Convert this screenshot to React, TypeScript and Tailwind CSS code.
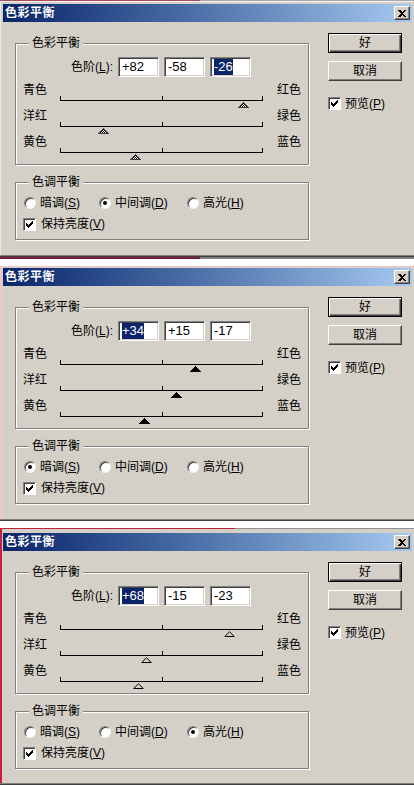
import React, { useId } from "react";

type TriKind = "hatch" | "solid" | "outline";

function Tri({ kind }: { kind: TriKind }) {
  const id = useId().replace(/:/g, "");
  if (kind === "solid") {
    return (
      <svg width="11" height="6" viewBox="0 0 11 6" shapeRendering="crispEdges">
        <path d="M5.5 0 L11 6 L0 6 Z" fill="#000" />
      </svg>
    );
  }
  if (kind === "outline") {
    return (
      <svg width="11" height="6" viewBox="0 0 11 6">
        <path d="M5.5 0.8 L10.3 5.5 L0.7 5.5 Z" fill="#d4d0c8" stroke="#000" strokeWidth="1" />
      </svg>
    );
  }
  return (
    <svg width="11" height="6" viewBox="0 0 11 6" shapeRendering="crispEdges">
      <defs>
        <pattern id={`p${id}`} width="2" height="2" patternUnits="userSpaceOnUse">
          <rect width="2" height="2" fill="#ffffff" />
          <rect x="0" y="0" width="1" height="1" fill="#000" />
          <rect x="1" y="1" width="1" height="1" fill="#000" />
        </pattern>
      </defs>
      <path d="M5.5 0.5 L10.5 5.5 L0.5 5.5 Z" fill={`url(#p${id})`} stroke="#404040" strokeWidth="1" />
    </svg>
  );
}

function CheckBox() {
  return (
    <div className="w-[13px] h-[13px] bg-white border-t border-l border-t-[#808080] border-l-[#808080] border-b border-r border-b-white border-r-white shadow-[inset_1px_1px_0_#404040] flex items-center justify-center shrink-0">
      <svg width="7" height="7" viewBox="0 0 7 7" shapeRendering="crispEdges">
        <path d="M0 2h1v1h1v1h1V3h1V2h1V1h1V0h1v3h-1v1h-1v1h-1v1h-1v1H2V6H1V5H0z" fill="#000" />
      </svg>
    </div>
  );
}

function Radio({ on }: { on: boolean }) {
  return (
    <div className="w-[12px] h-[12px] rounded-full bg-white border border-t-[#808080] border-l-[#808080] border-b-[#f4f4f4] border-r-[#f4f4f4] shadow-[inset_1px_1px_0_#404040] flex items-center justify-center shrink-0">
      {on && <div className="w-[4px] h-[4px] rounded-full bg-black" />}
    </div>
  );
}

function Field({ v, sel }: { v: string; sel: boolean }) {
  return (
    <div className="w-[41px] h-[20px] bg-white border-t border-l border-t-[#808080] border-l-[#808080] border-b border-r border-b-white border-r-white shadow-[inset_1px_1px_0_#404040,inset_-1px_-1px_0_#d4d0c8] flex items-center pl-[3px] text-[13px] leading-[16px]">
      {sel ? <span className="bg-[#0a246a] text-white">{v}</span> : <span>{v}</span>}
    </div>
  );
}

function SliderRow({ left, right, v, kind }: { left: string; right: string; v: number; kind: TriKind }) {
  const pct = (v + 100) / 2;
  return (
    <div className="h-[26px]">
      <div className="flex justify-between px-[7px] leading-[14px] h-[14px]">
        <span>{left}</span>
        <span>{right}</span>
      </div>
      <div className="relative ml-[44px] -mt-[1px] w-[203px] h-[5px] border-l border-r border-b border-black">
        <div className="absolute left-1/2 top-0 h-full w-px bg-black" />
        <div className="absolute top-[6px] h-[6px] leading-none" style={{ left: `calc(${pct}% - 5.5px)` }}>
          <Tri kind={kind} />
        </div>
      </div>
    </div>
  );
}

function Button({ label, def }: { label: string; def?: boolean }) {
  return def ? (
    <div className="w-[74px] h-[20px] border border-black flex items-center justify-center shadow-[inset_1px_1px_0_#fff,inset_-1px_-1px_0_#404040,inset_-2px_-2px_0_#808080] leading-[14px]">
      {label}
    </div>
  ) : (
    <div className="w-[74px] h-[20px] border border-t-white border-l-white border-b-[#404040] border-r-[#404040] flex items-center justify-center shadow-[inset_-1px_-1px_0_#808080] leading-[14px]">
      {label}
    </div>
  );
}

function Dialog({
  values,
  sel,
  tone,
  kind,
  bodyH,
}: {
  values: number[];
  sel: number;
  tone: number;
  kind: TriKind;
  bodyH: number;
}) {
  const fmt = (n: number) => (n > 0 ? `+${n}` : `${n}`);
  const tones = [
    { t: "暗调", k: "S", w: "w-[75px]" },
    { t: "中间调", k: "D", w: "w-[88px]" },
    { t: "高光", k: "H", w: "w-[80px]" },
  ];
  return (
    <div className="pr-[2px]">
      <div className="h-[18px] flex items-center justify-between bg-linear-to-r from-[#0a246a] to-[#a6caf0]">
        <span className="pl-[2px] text-white font-bold text-[12px] leading-[18px] tracking-[0.5px]">色彩平衡</span>
        <div className="mr-[2px] w-[16px] h-[14px] bg-[#d4d0c8] border border-t-white border-l-white border-b-[#404040] border-r-[#404040] shadow-[inset_-1px_-1px_0_#808080] flex items-center justify-center">
          <svg width="8" height="7" viewBox="0 0 8 7" shapeRendering="crispEdges">
            <path d="M0 0h2l2 2 2-2h2L5 3.5 8 7H6L4 5 2 7H0l3-3.5z" fill="#000" />
          </svg>
        </div>
      </div>
      <div className="flex bg-[#d4d0c8]" style={{ height: bodyH }}>
        <div className="ml-[12px] mt-[14px] w-[294px]">
          <fieldset className="border border-[#808080] shadow-[1px_1px_0_#fff,inset_1px_1px_0_#fff] pt-[7px] pb-[3px]">
            <legend className="ml-[13px] px-[3px] bg-[#d4d0c8] leading-[14px]">色彩平衡</legend>
            <div className="flex items-center h-[20px] gap-[5px]">
              <div className="w-[97px] text-right leading-[14px]">
                色阶(<u>L</u>):
              </div>
              {values.map((v, i) => (
                <Field key={i} v={fmt(v)} sel={i === sel} />
              ))}
            </div>
            <div className="mt-[6px]">
              <SliderRow left="青色" right="红色" v={values[0]} kind={kind} />
              <SliderRow left="洋红" right="绿色" v={values[1]} kind={kind} />
              <SliderRow left="黄色" right="蓝色" v={values[2]} kind={kind} />
            </div>
          </fieldset>
          <fieldset className="mt-[10px] border border-[#808080] shadow-[1px_1px_0_#fff,inset_1px_1px_0_#fff] pt-[7px] pb-[8px]">
            <legend className="ml-[13px] px-[3px] bg-[#d4d0c8] leading-[14px]">色调平衡</legend>
            <div className="flex items-center h-[14px] pl-[8px]">
              {tones.map((o, i) => (
                <div key={i} className={`flex items-center ${o.w}`}>
                  <Radio on={i === tone} />
                  <span className="ml-[4px] leading-[14px]">
                    {o.t}(<u>{o.k}</u>)
                  </span>
                </div>
              ))}
            </div>
            <div className="mt-[7px] flex items-center h-[14px] pl-[7px]">
              <CheckBox />
              <span className="ml-[5px] leading-[14px]">
                保持亮度(<u>V</u>)
              </span>
            </div>
          </fieldset>
        </div>
        <div className="ml-[19px] mt-[11px] flex flex-col">
          <Button label="好" def />
          <div className="mt-[8px]">
            <Button label="取消" />
          </div>
          <div className="mt-[16px] flex items-center h-[13px]">
            <CheckBox />
            <span className="ml-[4px] leading-[14px]">
              预览(<u>P</u>)
            </span>
          </div>
        </div>
      </div>
    </div>
  );
}

export default function App() {
  return (
    <div className="w-[414px] h-[785px] overflow-hidden bg-white text-[12px] text-black font-['Liberation_Sans','Noto_Sans_CJK_SC',sans-serif]">
      {/* dialog 1 */}
      <div className="flex h-[1px]">
        <div className="w-[200px] bg-[#b04a5c]" />
        <div className="flex-1 bg-[#a8a8a8]" />
      </div>
      <div className="bg-[#d4d0c8] border-l border-l-[#e8e8e8] pl-[2px] pt-[3px] border-t border-t-[#f4f4f4]">
        <div className="-mt-[1px]">
          <Dialog values={[82, -58, -26]} sel={2} tone={1} kind="hatch" bodyH={233} />
        </div>
        <div className="h-[1px] bg-[#808080] -ml-[3px]" />
        <div className="h-[1px] bg-[#404040] -ml-[3px]" />
      </div>
      <div className="flex h-[2px]">
        <div className="w-[200px] bg-[#7c1c34]" />
        <div className="flex-1 bg-[#808080]" />
      </div>
      <div className="h-[7px]" />
      {/* dialog 2 */}
      <div className="bg-[#d4d0c8] border-t border-t-[#f4c4c4] border-l-2 border-l-[#f2c6c6] pl-[1px] pt-[1px]">
        <Dialog values={[34, 15, -17]} sel={0} tone={0} kind="solid" bodyH={233} />
        <div className="h-[1px] bg-[#808080] -ml-[3px]" />
        <div className="h-[1px] bg-[#404040] -ml-[3px]" />
      </div>
      <div className="h-[7px]" />
      {/* dialog 3 */}
      <div className="flex h-[1px]">
        <div className="w-[235px] bg-[#c0203c]" />
        <div className="flex-1 bg-[#909090]" />
      </div>
      <div className="bg-[#d4d0c8] border-l-2 border-l-[#c8203c] pl-[1px] pt-[4px]">
        <Dialog values={[68, -15, -23]} sel={0} tone={2} kind="outline" bodyH={232} />
        <div className="h-[1px] bg-[#808080] -ml-[3px]" />
        <div className="h-[1px] bg-[#404040] -ml-[3px]" />
      </div>
    </div>
  );
}
